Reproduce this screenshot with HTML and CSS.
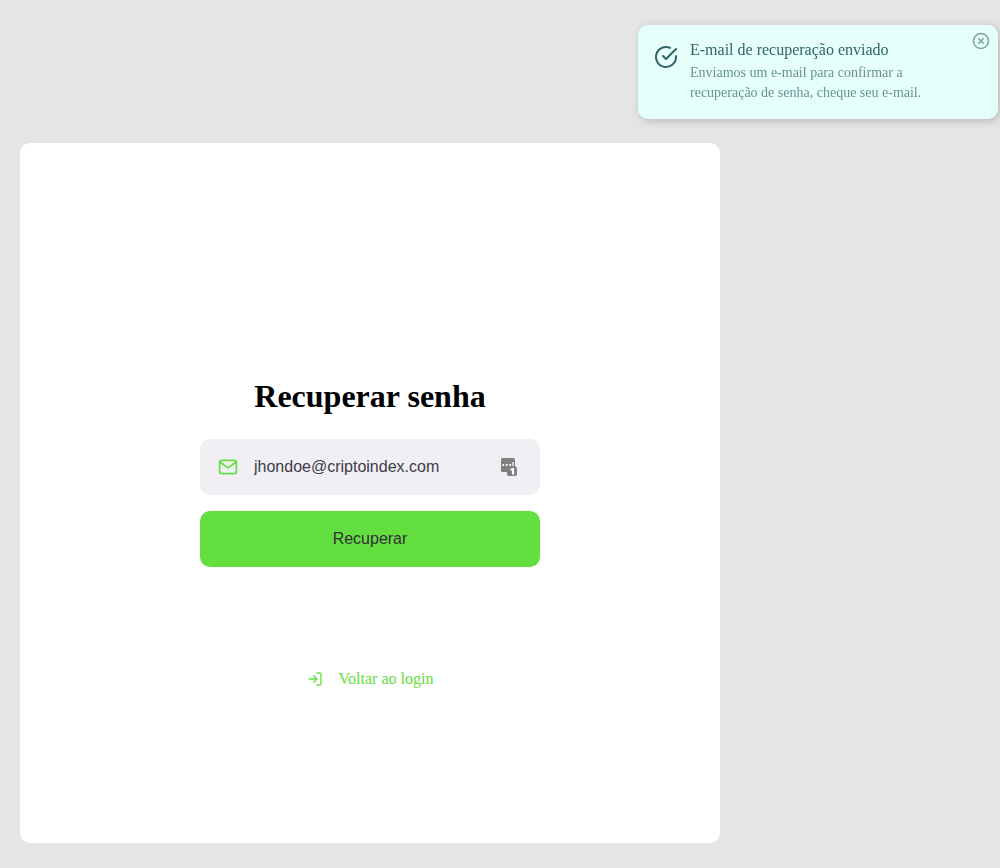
FILE: index.html
```html
<!DOCTYPE html>
<html lang="pt-BR">
<head>
  <meta charset="utf-8">
  <meta name="viewport" content="width=device-width, initial-scale=1">
  <title>Recuperar senha</title>
  <link rel="stylesheet" href="styles.css">
</head>
<body>
  <main class="page">
    <section class="card">
      <form class="form">
        <h1 class="title">Recuperar senha</h1>
        <div class="field">
          <svg class="icon field-icon" width="20" height="20" viewBox="0 0 24 24" aria-hidden="true">
            <path d="M4 4h16c1.1 0 2 .9 2 2v12c0 1.1-.9 2-2 2H4c-1.1 0-2-.9-2-2V6c0-1.1.9-2 2-2z"/>
            <polyline points="22,6 12,13 2,6"/>
          </svg>
          <input class="input" type="text" name="email" aria-label="E-mail" value="jhondoe@criptoindex.com">
          <svg class="manager-icon" width="18" height="18" viewBox="0 0 18 18" aria-hidden="true">
            <rect class="manager-shape" x="1" y="0" width="14" height="14" rx="1.5"/>
            <circle class="manager-cut" cx="3.2" cy="7" r="1.1"/>
            <circle class="manager-cut" cx="6.7" cy="7" r="1.1"/>
            <circle class="manager-cut" cx="10.2" cy="7" r="1.1"/>
            <rect class="manager-cut" x="12.4" y="4" width="1.2" height="4.2"/>
            <rect class="manager-shape" x="7" y="8.4" width="10" height="9.6" rx="2"/>
            <path class="manager-cut" d="M12.2 10h1.9v6.4h-2.1v-4.1l-1.7.5v-1.6z"/>
          </svg>
        </div>
        <button class="submit" type="submit">Recuperar</button>
      </form>
      <a class="back" href="#login">
        <svg class="icon" width="16" height="16" viewBox="0 0 24 24" aria-hidden="true">
          <path d="M15 3h4a2 2 0 0 1 2 2v14a2 2 0 0 1-2 2h-4"/>
          <polyline points="10 17 15 12 10 7"/>
          <line x1="15" y1="12" x2="3" y2="12"/>
        </svg>
        Voltar ao login
      </a>
    </section>
  </main>

  <aside class="toast" role="status">
    <svg class="icon toast-icon" width="24" height="24" viewBox="0 0 24 24" aria-hidden="true">
      <path d="M22 11.08V12a10 10 0 1 1-5.93-9.14"/>
      <polyline points="22 4 12 14.01 9 11.01"/>
    </svg>
    <div class="toast-body">
      <strong class="toast-title">E-mail de recuperação enviado</strong>
      <p class="toast-text">Enviamos um e-mail para confirmar a recuperação de senha, cheque seu e-mail.</p>
    </div>
    <button class="toast-close" type="button" aria-label="Fechar">
      <svg class="icon" width="18" height="18" viewBox="0 0 24 24" aria-hidden="true">
        <circle cx="12" cy="12" r="10"/>
        <line x1="15" y1="9" x2="9" y2="15"/>
        <line x1="9" y1="9" x2="15" y2="15"/>
      </svg>
    </button>
  </aside>
</body>
</html>
```
FILE: styles.css
```css
* {
  box-sizing: border-box;
  margin: 0;
  padding: 0;
}

body {
  background: #e5e5e5;
  font-family: "Liberation Serif", "Times New Roman", serif;
  font-size: 16px;
}

.page {
  padding: 143px 20px 25px;
}

.card {
  display: flex;
  flex-direction: column;
  align-items: center;
  justify-content: center;
  max-width: 700px;
  min-height: 700px;
  border-radius: 10px;
  background: #fff;
}

.icon {
  flex-shrink: 0;
  fill: none;
  stroke: currentColor;
  stroke-width: 2;
  stroke-linecap: round;
  stroke-linejoin: round;
}

.form {
  width: 100%;
  max-width: 340px;
  margin: 80px 0;
  text-align: center;
}

.title {
  margin-bottom: 24px;
  color: #000;
  font-size: 32px;
  line-height: 38px;
}

.field {
  display: flex;
  align-items: center;
  padding: 18px;
  border-radius: 10px;
  background: #f0eff4;
}

.field-icon {
  margin-right: 16px;
  color: #63e040;
}

.input {
  flex: 1;
  min-width: 0;
  border: 0;
  outline: 0;
  background: transparent;
  color: #3e3b47;
  font-family: "Liberation Sans", Arial, sans-serif;
  font-size: 16px;
  line-height: 20px;
}

.manager-icon {
  margin-right: 4px;
}

.manager-shape {
  fill: #808080;
}

.manager-cut {
  fill: #fff;
}

.submit {
  width: 100%;
  height: 56px;
  margin-top: 16px;
  border: 0;
  border-radius: 10px;
  background: #63e040;
  color: #312e38;
  font-family: "Liberation Sans", Arial, sans-serif;
  font-size: 16px;
  cursor: pointer;
}

.back {
  display: flex;
  align-items: center;
  gap: 16px;
  margin: 24px 0 2px;
  color: #63e040;
  line-height: 16px;
  text-decoration: none;
}

.toast {
  position: fixed;
  top: 25px;
  right: 2px;
  display: flex;
  width: 360px;
  padding: 16px 30px 16px 16px;
  border-radius: 10px;
  background: #e6fffa;
  box-shadow: 2px 2px 8px rgba(0, 0, 0, 0.2);
  color: #2e656a;
}

.toast-icon {
  margin: 4px 12px 0 0;
}

.toast-title {
  display: block;
  font-weight: 400;
  line-height: 18px;
}

.toast-text {
  margin-top: 4px;
  font-size: 14px;
  line-height: 20px;
  opacity: 0.7;
}

.toast-close {
  position: absolute;
  top: 7px;
  right: 8px;
  display: flex;
  border: 0;
  background: transparent;
  color: inherit;
  opacity: 0.6;
  cursor: pointer;
}
```
